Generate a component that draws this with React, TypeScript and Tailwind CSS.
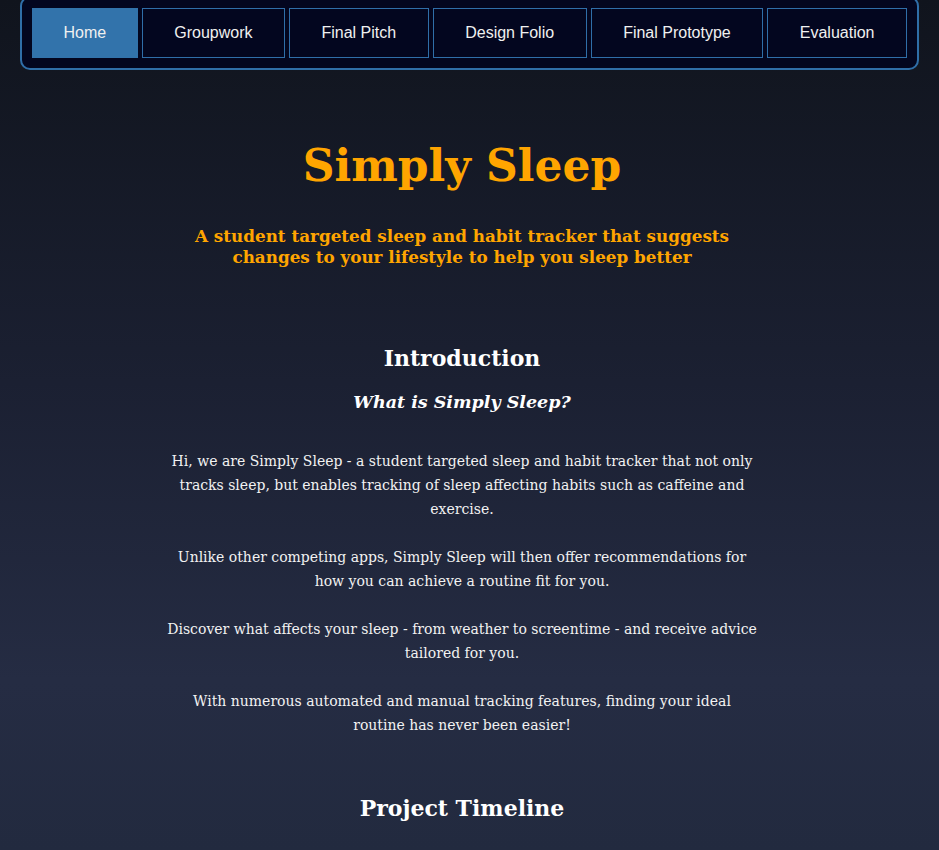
import React from 'react'

const links = ['Home', 'Groupwork', 'Final Pitch', 'Design Folio', 'Final Prototype', 'Evaluation']

const paras = [
  'Hi, we are Simply Sleep - a student targeted sleep and habit tracker that not only tracks sleep, but enables tracking of sleep affecting habits such as caffeine and exercise.',
  'Unlike other competing apps, Simply Sleep will then offer recommendations for how you can achieve a routine fit for you.',
  'Discover what affects your sleep - from weather to screentime - and receive advice tailored for you.',
  'With numerous automated and manual tracking features, finding your ideal routine has never been easier!',
]

export default function App() {
  return (
    <div className="min-h-[850px] overflow-hidden bg-[linear-gradient(to_bottom,#10141d_0%,#1b2032_45%,#252c43_80%,#222a3f_100%)] font-['DejaVu_Serif',serif] text-white">
      <nav className="mx-[20px] mt-[-4px] rounded-[10px] border-2 border-[#2f6ea8] bg-[#03061f] p-[10px]">
        <ul className="flex gap-[4px] font-['Liberation_Sans',Arial,sans-serif] text-[16px] text-[#f0f0f0]">
          {links.map((l, i) => (
            <li
              key={l}
              className={
                i === 0
                  ? 'flex h-[50px] grow items-center justify-center whitespace-nowrap bg-[#3273ab] px-[31px]'
                  : 'flex h-[50px] grow items-center justify-center whitespace-nowrap border border-[#2f6ea8] px-[31px]'
              }
            >
              {l}
            </li>
          ))}
        </ul>
      </nav>

      <main className="flex flex-col items-center pr-[15px] text-center">
        <h1 className="mt-[68px] text-[44px] font-bold leading-[56px] text-[#ffa500]">Simply Sleep</h1>
        <h3 className="mt-[32px] w-[600px] text-[16.8px] font-bold leading-[21px] text-[#ffa500]">
          A student targeted sleep and habit tracker that suggests changes to your lifestyle to help you sleep better
        </h3>

        <h2 className="mt-[75px] text-[22px] font-bold leading-[30px]">Introduction</h2>
        <h4 className="mt-[17px] text-[17.5px] font-bold italic leading-[24px]">What is Simply Sleep?</h4>

        <div className="mt-[35px] flex w-[592px] flex-col gap-[24px] text-[14px] leading-[24px] text-[#f2f2f2]">
          {paras.map((p) => (
            <p key={p}>{p}</p>
          ))}
        </div>

        <h2 className="mt-[56px] text-[22px] font-bold leading-[30px]">Project Timeline</h2>
      </main>
    </div>
  )
}
